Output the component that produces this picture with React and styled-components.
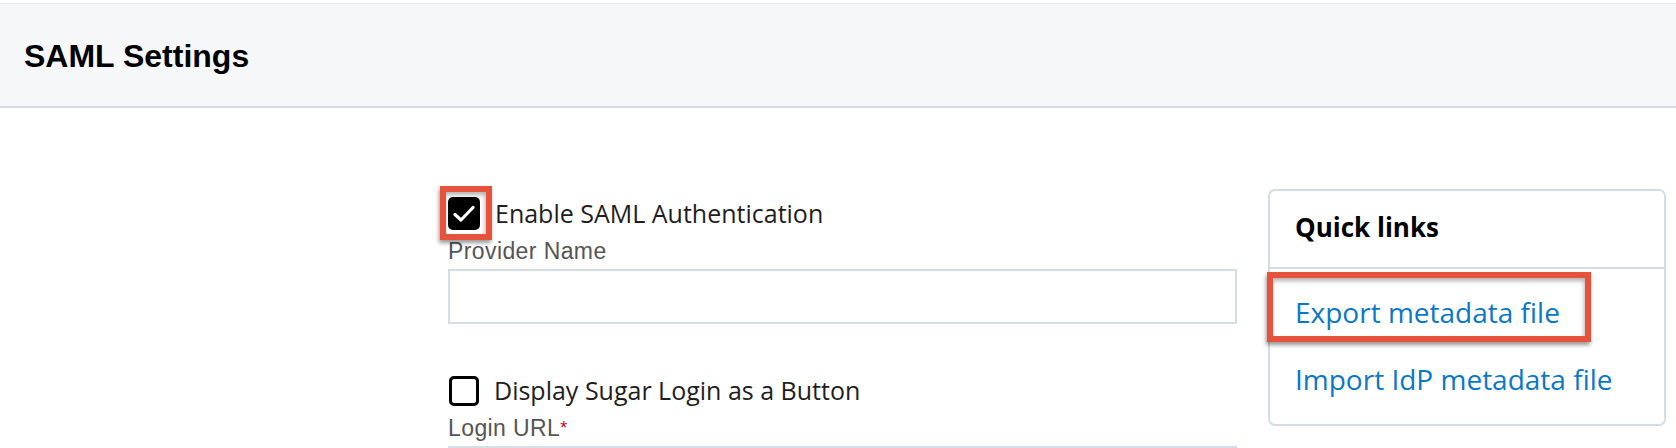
import styled, { createGlobalStyle } from "styled-components"

const GlobalStyle = createGlobalStyle`
    body {
        margin: 0;
        background: #fff;
        font-family: "Open Sans", "Noto Sans", sans-serif;
    }
`

const Page = styled.div`
    width: 1676px;
    height: 448px;
    overflow: hidden;
    padding-top: 3px;
    box-sizing: border-box;
`

const Header = styled.header`
    background: #f6f7f9;
    border-top: 1px solid #e6e8eb;
    border-bottom: 2px solid #d5dce4;
    padding: 34px 24px 32px;
`

const Title = styled.h1`
    margin: 0;
    font-family: "Liberation Sans", Arial, sans-serif;
    font-size: 32px;
    line-height: 36px;
    font-weight: 700;
    color: #000;
`

const Content = styled.main`
    display: flex;
    align-items: flex-start;
    gap: 31px;
    padding: 81px 10px 0 448px;
`

const Form = styled.section`
    width: 789px;
    margin-top: 8px;
    display: flex;
    flex-direction: column;
`

const Group = styled.div`
    display: flex;
    flex-direction: column;
    & + & {
        margin-top: 50px;
    }
`

const CheckRow = styled.label`
    display: flex;
    align-items: center;
    gap: 15px;
    height: 33px;
    font-size: 25px;
    line-height: 33px;
    color: #1e1e1e;
`

const Box = styled.span`
    position: relative;
    flex: none;
    box-sizing: border-box;
    width: ${p => (p.$checked ? "32px" : "30px")};
    height: ${p => (p.$checked ? "33px" : "30px")};
    margin-left: ${p => (p.$checked ? "0" : "1px")};
    border-radius: 5px;
    background: ${p => (p.$checked ? "#000" : "#fff")};
    border: ${p => (p.$checked ? "none" : "3px solid #000")};
    display: flex;
    align-items: center;
    justify-content: center;
`

const Highlight = styled.span`
    position: absolute;
    top: ${p => p.$top};
    left: ${p => p.$left};
    right: ${p => p.$right};
    bottom: ${p => p.$bottom};
    border: 6px solid #e5533d;
    box-shadow: -1px 3px 4px rgba(0, 0, 0, 0.4), inset -1px 3px 4px rgba(0, 0, 0, 0.3);
    pointer-events: none;
`

const Label = styled.div`
    margin-top: 8px;
    font-family: "Liberation Sans", Arial, sans-serif;
    font-size: 23px;
    letter-spacing: 0.4px;
    line-height: 26px;
    color: #555;
`

const Required = styled.span`
    color: #d0021b;
    font-size: 18px;
    vertical-align: top;
`

const TextInput = styled.input`
    margin-top: 5px;
    height: 55px;
    box-sizing: border-box;
    border: 2px solid #d5dee6;
    border-radius: 0;
    background: #fff;
    outline: none;
    width: 100%;
`

const Panel = styled.aside`
    width: 398px;
    box-sizing: border-box;
    border: 2px solid #d4dde6;
    border-radius: 7px;
    background: #fff;
`

const PanelHead = styled.h2`
    margin: 0;
    padding: 18px 25px 22px;
    font-size: 26px;
    line-height: 36px;
    font-weight: 700;
    color: #000;
    border-bottom: 2px solid #d4dde6;
`

const LinkList = styled.div`
    display: flex;
    flex-direction: column;
    align-items: flex-start;
    gap: 27px;
    padding: 23px 25px 25px;
`

const Link = styled.a`
    position: relative;
    font-size: 28px;
    line-height: 40px;
    color: #0b77c6;
    text-decoration: none;
    cursor: pointer;
`

function Check() {
    return (
        <svg width="22" height="18" viewBox="0 0 22 18">
            <polyline points="2,9.5 8,15 20,2.5" fill="none" stroke="#fff" strokeWidth="3.2" strokeLinecap="round" strokeLinejoin="round" />
        </svg>
    )
}

export default function App() {
    return (
        <Page>
            <GlobalStyle />
            <Header>
                <Title>SAML Settings</Title>
            </Header>
            <Content>
                <Form>
                    <Group>
                        <CheckRow>
                            <Box $checked>
                                <Check />
                                <Highlight $top="-11px" $left="-8px" $right="-12px" $bottom="-10px" />
                            </Box>
                            Enable SAML Authentication
                        </CheckRow>
                        <Label>Provider Name</Label>
                        <TextInput type="text" />
                    </Group>
                    <Group>
                        <CheckRow>
                            <Box />
                            Display Sugar Login as a Button
                        </CheckRow>
                        <Label>Login URL<Required>*</Required></Label>
                        <TextInput type="text" />
                    </Group>
                </Form>
                <Panel>
                    <PanelHead>Quick links</PanelHead>
                    <LinkList>
                        <Link>
                            Export metadata file
                            <Highlight $top="-20px" $left="-28px" $right="-31px" $bottom="-10px" />
                        </Link>
                        <Link>Import IdP metadata file</Link>
                    </LinkList>
                </Panel>
            </Content>
        </Page>
    )
}
